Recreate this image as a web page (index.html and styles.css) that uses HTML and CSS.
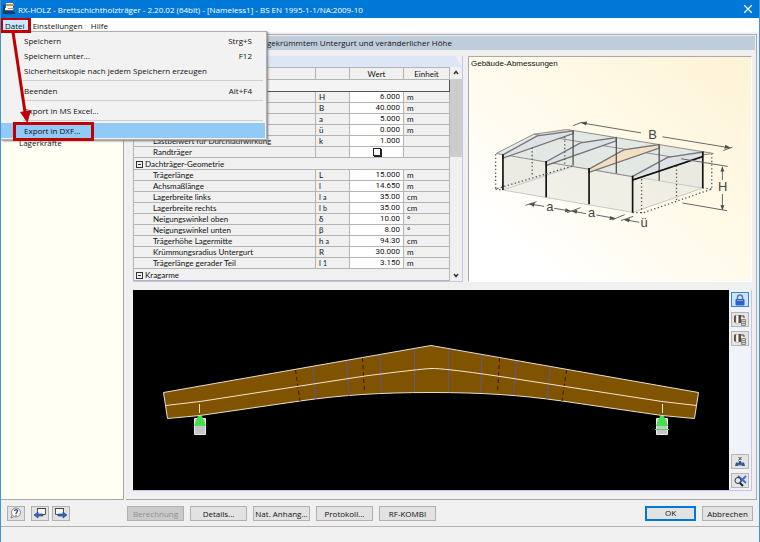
FILE: index.html
```html
<!DOCTYPE html>
<html lang="de">
<head>
<meta charset="utf-8">
<title>RX-HOLZ - Brettschichtholzträger</title>
<link rel="stylesheet" href="styles.css">
</head>
<body>
<div class="window">
  <header class="titlebar">
    <svg class="app-icon" viewBox="0 0 12 12" aria-hidden="true">
      <path fill="#123a6b" d="M0 2h2v7h10v2H0z"/>
      <path fill="#f4f4f4" d="M3 0h7v7H2V5h1z"/>
      <path fill="#c98d4e" d="M3 1h8v2H3zM5 5h6v1H5z"/>
      <path fill="#3c3c3c" d="M1 8h10v1H1z"/>
    </svg>
    <h1 class="title">RX-HOLZ - Brettschichtholzträger - 2.20.02 (64bit) - [Nameless1] - BS EN 1995-1-1/NA:2009-10</h1>
    <button class="close" type="button" aria-label="Schließen">
      <svg viewBox="0 0 8 8"><path d="M1 1l6 6M7 1L1 7" stroke="#fff" fill="none"/></svg>
    </button>
  </header>

  <nav class="menubar">
    <button class="menu-title open" type="button">Datei</button>
    <button class="menu-title" type="button">Einstellungen</button>
    <button class="menu-title" type="button">Hilfe</button>
    <div class="dropdown">
      <button class="item" type="button"><span>Speichern</span><span>Strg+S</span></button>
      <button class="item" type="button"><span>Speichern unter...</span><span>F12</span></button>
      <button class="item" type="button"><span>Sicherheitskopie nach jedem Speichern erzeugen</span></button>
      <hr>
      <button class="item" type="button"><span>Beenden</span><span>Alt+F4</span></button>
      <hr>
      <button class="item" type="button"><span>Export in MS Excel...</span></button>
      <hr>
      <button class="item selected" type="button"><span>Export in DXF...</span></button>
    </div>
    <svg class="callout" viewBox="0 0 96 124" aria-hidden="true">
      <g fill="none" stroke="#c00000" stroke-width="3">
        <rect x="0.500" y="0.500" width="28" height="13"/>
        <rect x="13.500" y="105.500" width="78" height="16"/>
        <path d="M12 14L24 94"/>
      </g>
      <path fill="#c00000" d="M19 94l11-2-3.500 13z"/>
    </svg>
  </nav>

  <main class="workspace">
    <aside class="tree"><a class="tree-item" href="#">Lagerkräfte</a></aside>
    <section class="content">
      <h2 class="banner">gekrümmtem Untergurt und veränderlicher Höhe</h2>
      <div class="upper">
        <div class="grid-panel">
          <div class="tab"></div>
          <div class="grid-body">
            <table class="params">
              <colgroup><col><col class="c-sym"><col class="c-val"><col class="c-unit"></colgroup>
              <thead><tr><th></th><th></th><th>Wert</th><th>Einheit</th></tr></thead>
              <tbody>
                <tr class="group active"><td colspan="4"></td></tr>
                <tr><td></td><td>H</td><td>6.000</td><td>m</td></tr>
                <tr><td></td><td>B</td><td>40.000</td><td>m</td></tr>
                <tr><td></td><td>a</td><td>5.000</td><td>m</td></tr>
                <tr><td></td><td>ü</td><td>0.000</td><td>m</td></tr>
                <tr><td>Lastbeiwert für Durchlaufwirkung</td><td>k</td><td>1.000</td><td></td></tr>
                <tr><td><label for="edge">Randträger</label></td><td></td><td class="tick"><input type="checkbox" id="edge"></td><td></td></tr>
                <tr class="group"><td colspan="4"><span class="fold"></span>Dachträger-Geometrie</td></tr>
                <tr><td>Trägerlänge</td><td>L</td><td>15.000</td><td>m</td></tr>
                <tr><td>Achsmaßlänge</td><td>l</td><td>14.650</td><td>m</td></tr>
                <tr><td>Lagerbreite links</td><td>l <small>a</small></td><td>35.00</td><td>cm</td></tr>
                <tr><td>Lagerbreite rechts</td><td>l <small>b</small></td><td>35.00</td><td>cm</td></tr>
                <tr><td>Neigungswinkel oben</td><td>δ</td><td>10.00</td><td>°</td></tr>
                <tr><td>Neigungswinkel unten</td><td>β</td><td>8.00</td><td>°</td></tr>
                <tr><td>Trägerhöhe Lagermitte</td><td>h <small>a</small></td><td>94.30</td><td>cm</td></tr>
                <tr><td>Krümmungsradius Untergurt</td><td>R</td><td>30.000</td><td>m</td></tr>
                <tr><td>Trägerlänge gerader Teil</td><td>l <small>1</small></td><td>3.150</td><td>m</td></tr>
                <tr class="group"><td colspan="4"><span class="fold"></span>Kragarme</td></tr>
              </tbody>
            </table>
            <div class="scrollbar">
              <svg viewBox="0 0 12 12"><path d="M4 7l2-2.500 2 2.500"/></svg>
              <div class="track"><div class="thumb"></div></div>
              <svg viewBox="0 0 12 12"><path d="M4 5l2 2.500 2-2.500"/></svg>
            </div>
          </div>
        </div>

        <figure class="building">
          <figcaption>Gebäude-Abmessungen</figcaption>
          <svg viewBox="10 60 848 632">
            <g fill="#e8e8e2" fill-opacity=".65">
              <path d="M112 312L502 379V485L112 418z"/>
              <path d="M502 388L713 316V412L502 485z"/>
              <path d="M112 322L323 248V347L112 418z"/>
              <path d="M323 240L713 304V412L323 347z"/>
            </g>
            <path d="M92 308L205 250 305 236 745 308 640 322 530 382z" fill="#e1e6e4" fill-opacity=".8"/>
            <path d="M112 418L502 485 713 412 323 347z" fill="none" stroke="#c9c9c6" stroke-width="3"/>
            <path d="M92 308L205 250 305 236 745 308M92 308L502 378M205 250L640 322M530 380L640 322 745 308" fill="none" stroke="#8d8d8d" stroke-width="3"/>
            <g stroke="#747474" stroke-width="4" fill="#dce2e6">
              <path d="M112 312L215 255 323 240V248L112 322z"/>
              <path d="M242 333L345 276 453 260V270L242 344z"/>
              <path fill="#f3dfc3" d="M371 355L475 297 582 281V292L371 365z"/>
              <path d="M502 377L607 320 713 304V318L502 388z"/>
            </g>
            <path d="M323 238V345M453 260V368M582 281V390" stroke="#555" stroke-width="4"/>
            <path d="M112 310V418M242 331V440M371 352V461M502 375V486M713 302V412M502 388L713 317" stroke="#111" stroke-width="5" fill="none"/>
            <path d="M90 310V415L323 345M200 290V378M298 258V345M529 385V488L740 415V310M634 345V452M502 486H529M713 412L740 415M90 415L112 418" fill="none" stroke="#555" stroke-width="4" stroke-dasharray="4 7"/>
            <path d="M323 224L350 214M348 216L527 246M592 258L795 291M775 299L802 289M648 324L788 347M652 457L786 480M772 348V388M772 430V478M180 464L213 453M192 460L236 467M266 473L315 481M305 486L345 471M318 481L362 489M393 493L448 503M440 508L478 492M467 510L504 497M478 507L522 515" fill="none" stroke="#666" stroke-width="3"/>
            <path fill="#4d4d4d" d="M346 215l19-3-3 12zM797 291l-19 3 3-12zM772 347l-6 15h12zM772 479l-6-15h12zM190 460l18-4-3 12zM316 481l-18 4 3-12zM318 481l18-4-3 12zM450 504l-18 4 3-12zM476 507l18-4-3 12z"/>
            <g class="dims"><text x="549" y="264">B</text><text x="759" y="422">H</text><text x="242" y="482">a</text><text x="368" y="500">a</text><text x="526" y="529">ü</text></g>
          </svg>
        </figure>
      </div>

      <div class="viewer">
        <svg class="beam" viewBox="133 290 596 200">
          <path fill="#805300" stroke="#e8e0d0" d="M163.500 392.500L431 345.500 698.500 392.500 694.500 418.500 662 415.500 562 401C520 395 482 392.500 431 392.500S342 395 300 401L200 415.500 167.500 418.500z"/>
          <path fill="none" stroke="#62568a" d="M312.500 367L316 399M346.500 361L349 396M380 355L381.500 393M414.500 349V392M448.500 349V392M482 355L480.500 393M516.500 361L513.500 395M550.500 367L547 399"/>
          <path fill="none" stroke="#3a1400" stroke-dasharray="4 3" d="M295.500 370L300 401M362.500 358L364.500 393M499.500 358L497.500 393M566.500 370L562 401"/>
          <path fill="none" stroke="#f2e6d0" d="M165.500 405.500L200 401.500 365 376Q420 369 431 368.500T497 376L662 401.500 696.500 405.500M199.500 404V413M662.500 404V413"/>
          <g fill="#c6c6c6" stroke="#ededed"><path d="M194.500 418.500h11v16h-11zM656.500 418.500h11v16h-11z"/></g>
          <path fill="#42e04c" d="M198 416h4l4 10h-12zM660 416h4l4 10h-12z"/>
          <path stroke="#42e04c" d="M655 429.500H669"/>
        </svg>
        <div class="tools">
          <button class="tool locked" type="button" aria-label="Sperren"><svg viewBox="0 0 14 12"><path d="M4.500 6V3.500a2.500 2.500 0 0 1 5 0V6" fill="none" stroke="#667896" stroke-width="1.500"/><rect x="2.500" y="5" width="9" height="6.500" rx="1" fill="#3161c8"/><path d="M4 6.500h6" stroke="#79a1ec"/></svg></button>
          <button class="tool" type="button" aria-label="Ansicht kopieren"><svg viewBox="0 0 14 12"><path fill="#5f4a3c" d="M1 2l2-1v8L1 8zM5 1h3v8H5z"/><path fill="#fff" stroke="#a49488" stroke-width=".5" d="M3 1.500h2.500v8H3z"/><path fill="none" stroke="#444" d="M8 2h3v2"/><path fill="#d4d4d4" stroke="#8a8a8a" d="M8.500 5.500h4v6h-4z"/><path stroke="#8a8a8a" d="M9 7.500h3M9 9.500h3"/></svg></button>
          <button class="tool" type="button" aria-label="Ansicht einfügen"><svg viewBox="0 0 14 12"><path fill="#5f4a3c" d="M1 2l2-1v8L1 8zM5 1h3v8H5z"/><path fill="#fff" stroke="#a49488" stroke-width=".5" d="M3 1.500h2.500v8H3z"/><path fill="none" stroke="#444" d="M8 2h3v2"/><path fill="#d4d4d4" stroke="#8a8a8a" d="M8.500 5.500h4v6h-4z"/><path stroke="#8a8a8a" d="M9 7.500h3M9 9.500h3"/></svg></button>
          <button class="tool push" type="button" aria-label="Bemaßung"><svg viewBox="0 0 14 12"><path d="M5.500 1l3 3M8.500 1L5.500 4.500" stroke="#444" fill="none"/><path d="M3 8.500h8" stroke="#4468ad" stroke-width="2"/><path fill="#36568e" d="M3 6.500h2V10H2zM11 6.500H9V10h3zM6 5h2l1 3H5z"/></svg></button>
          <button class="tool" type="button" aria-label="Alles zeigen"><svg viewBox="0 0 14 12"><path d="M5 1L13 8M13 1L6 8" stroke="#3e6fd0" stroke-width="2"/><circle cx="5" cy="5.500" r="3" fill="#dfe8f2" fill-opacity=".7" stroke="#333"/><path d="M7 8l3 3" stroke="#222" stroke-width="2"/></svg></button>
        </div>
      </div>
    </section>
  </main>

  <footer class="actions">
    <button class="btn icon" type="button" aria-label="Hilfe"><svg viewBox="0 0 14 12"><path d="M3 8l-1 3 4-2" fill="#fdfdfd" stroke="#888"/><circle cx="7" cy="5.500" r="4.500" fill="#fdfdfd" stroke="#888"/><path d="M5.500 4c.5-2 3.500-1.500 3 0S7 5.500 7 7M6.500 8.500h1" fill="none" stroke="#234c96" stroke-width="1.300"/></svg></button>
    <button class="btn icon" type="button" aria-label="Zurück"><svg viewBox="0 0 14 12"><path d="M4.500 1.500h8v6h-8z" fill="#f6f6f6" stroke="#555"/><path d="M4 1.500h9" stroke="#444"/><path fill="#3465c4" stroke="#1d3f8c" stroke-width=".6" d="M1 8l4-3v2h5v2H5v2z"/></svg></button>
    <button class="btn icon" type="button" aria-label="Weiter"><svg viewBox="0 0 14 12"><path d="M1.500 1.500h8v6h-8z" fill="#f6f6f6" stroke="#555"/><path d="M1 1.500h9" stroke="#444"/><path fill="#3465c4" stroke="#1d3f8c" stroke-width=".6" d="M13 8L9 5v2H4v2h5v2z"/></svg></button>
    <div class="group-main">
      <button class="btn" type="button" disabled>Berechnung</button>
      <button class="btn" type="button">Details...</button>
      <button class="btn" type="button">Nat. Anhang...</button>
      <button class="btn" type="button">Protokoll...</button>
      <button class="btn" type="button">RF-KOMBI</button>
    </div>
    <div class="group-end">
      <button class="btn default" type="button">OK</button>
      <button class="btn" type="button">Abbrechen</button>
    </div>
  </footer>
  <div class="status"></div>
</div>
</body>
</html>
```
FILE: styles.css
```css
* { box-sizing: border-box; }
body { margin: 0; font-family: "Open Sans", "Noto Sans", sans-serif; font-size: 8px; color: #111; }
button { font: inherit; color: inherit; margin: 0; padding: 0; border: 0; background: none; white-space: nowrap; }
svg { display: block; }

.window { display: flex; flex-direction: column; min-height: 100vh; background: #f0f0f0; border: 1px solid #3f96dc; border-top: 0; }

.titlebar { display: flex; align-items: center; height: 18px; background: #0078d7; color: #fff; padding: 0 6px 0 2px; gap: 3px; }
.app-icon { width: 12px; height: 12px; }
.title { margin: 0; font-size: 8px; font-weight: 400; flex: 1; }
.close { width: 10px; height: 10px; }

.menubar { position: relative; display: flex; height: 14px; background: #fff; }
.menu-title { padding: 0 4px; }
.menu-title.open { background: #cce8ff; }
.dropdown { position: absolute; z-index: 2; top: 13px; left: 0; width: 266px; padding: 1px 1px 1px 0; background: #f2f2f2; border: 1px solid #b0b0b0; border-left: 0; box-shadow: 1px 1px 2px #777; }
.item { display: flex; justify-content: space-between; width: 100%; height: 15px; line-height: 15px; padding: 0 13px 0 23px; }
.item.selected { background: #91c9f7; }
.dropdown hr { height: 1px; margin: 2px 2px 2px 22px; border: 0; background: #cfcfcf; }
.callout { position: absolute; z-index: 3; top: 0; left: 0; width: 96px; height: 124px; }

.workspace { flex: 1; display: grid; grid-template-columns: 123px 1fr; gap: 2px; padding: 2px 2px 0 0; }
.tree { background: #fffff4; border-right: 1px solid #a8a8a8; border-bottom: 1px solid #a8a8a8; padding: 103px 0 0 18px; }
.tree-item { color: inherit; text-decoration: none; }
.content { display: flex; flex-direction: column; border: 1px solid #a8a8a8; border-left: 0; padding: 1px 1px 8px 0; }
.banner { margin: 0 0 6px; height: 14px; line-height: 14px; padding-left: 141px; font-size: 8px; font-weight: 400; background: #bfcddb; }

.upper { display: grid; grid-template-columns: 330px 1fr; gap: 5px; margin: 0 3px 8px 7px; }
.grid-panel { border-right: 1px solid #c3c3ee; border-bottom: 1px solid #c3c3ee; }
.tab { height: 11px; background: #dce6f6; clip-path: polygon(0 0, 98% 0, 100% 100%, 0 100%); }
.grid-body { display: flex; }
.params { flex: 1; border-collapse: collapse; table-layout: fixed; font-family: Lato, sans-serif; font-size: 8px; line-height: 10px; }
.c-sym { width: 34px; }
.c-val { width: 54px; }
.c-unit { width: 46px; }
.params th, .params td { border: 1px solid #b4b4b4; padding: 0 3px; height: 11px; font-weight: 400; text-align: left; white-space: nowrap; }
.params th { text-align: center; height: 12px; }
.params td:first-child { padding-left: 19px; }
.params td:nth-child(3) { background: #fff; text-align: right; font-family: Roboto, sans-serif; }
.params .tick { text-align: center; }
.params .group td { height: 12px; padding-left: 2px; }
.params .group.active td { border: 1px solid #555; background: #f4f4f4; }
.params small { font-size: 7px; }
.tick input { appearance: none; display: block; width: 8px; height: 8px; margin: 0 auto; border: 1px solid #222; background: #fff; box-shadow: 1px 1px 0 #222; }
.fold { display: inline-block; width: 7px; height: 7px; margin-right: 2px; border: 1px solid #333; background: linear-gradient(#333, #333) center / 3px 1px no-repeat; vertical-align: -1px; }
.scrollbar { display: flex; flex-direction: column; width: 12px; background: #f0f0f0; }
.scrollbar svg { width: 12px; height: 12px; fill: none; stroke: #333; stroke-width: 1.5; }
.track { flex: 1; }
.thumb { height: 41%; background: #cdcdcd; }

.building { display: flex; flex-direction: column; margin: 0; border: 1px solid #aaa; border-right-color: #fff; border-bottom-color: #fff; background: linear-gradient(40deg, #fff 15%, #fff9e6 60%, #fdf3d6); font-family: "Liberation Sans", Arial, sans-serif; }
.building figcaption { font-size: 8px; line-height: 14px; padding-left: 2px; }
.building svg { flex: 1; width: 100%; min-height: 0; }
.dims { font: 39px "Liberation Sans", Arial, sans-serif; fill: #444; }

.viewer { flex: 1; display: flex; margin: 0 3px 0 7px; min-height: 0; border-right: 1px solid #c3c3ee; border-bottom: 1px solid #c3c3ee; }
.beam { flex: 1; min-width: 0; background: #000; }
.tools { display: flex; flex-direction: column; gap: 4px; width: 22px; padding: 2px; background: #f0f3fa; }
.tool { display: grid; place-items: center; width: 18px; height: 15px; border: 1px solid #b5b5b5; background: #e4e4e4; }
.tool svg, .btn svg { width: 14px; height: 12px; }
.tool.locked { margin-bottom: 1px; border-color: #2d8bd8; background: #cce4f7; }
.tool.push { margin-top: auto; }

.actions { display: flex; align-items: center; height: 27px; padding: 0 6px; border-bottom: 1px solid #b4b4b4; }
.btn { width: 57px; height: 15px; border: 1px solid #b0b0b0; background: #e2e2e2; }
.btn.icon { display: grid; place-items: center; width: 18px; margin-right: 6px; }
.btn.icon + .btn.icon + .btn.icon { margin-left: -3px; }
.btn:disabled { background: #cacaca; color: #919191; }
.btn.default { border: 2px solid #0078d7; line-height: 10px; }
.group-main { display: flex; gap: 6px; margin-left: 51px; }
.group-end { display: flex; gap: 6px; margin-left: auto; }
.group-end .btn { width: 51px; }
.status { height: 15px; }
```
